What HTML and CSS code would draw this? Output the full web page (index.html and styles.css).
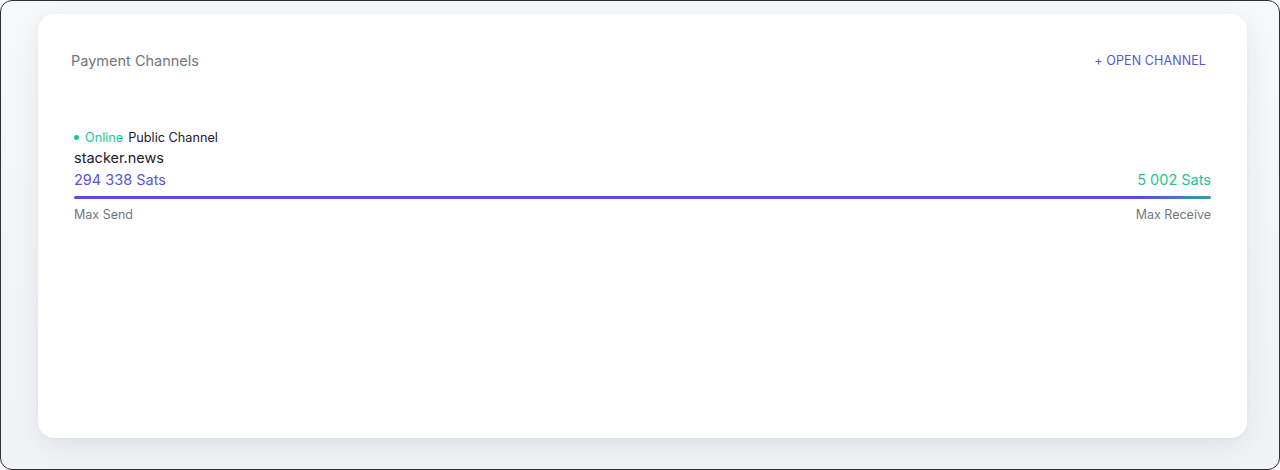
FILE: index.html
```html
<!DOCTYPE html>
<html lang="en">
<head>
<meta charset="utf-8">
<title>Payment Channels</title>
<link rel="stylesheet" href="styles.css">
</head>
<body>
<div class="frame">
  <section class="card">
    <header class="card-header">
      <h2 class="title">Payment Channels</h2>
      <button class="open-btn">+ OPEN CHANNEL</button>
    </header>
    <div class="channel">
      <div class="status">
        <span class="dot"></span>
        <span class="online">Online</span>
        <span class="kind">Public Channel</span>
      </div>
      <div class="alias">stacker.news</div>
      <div class="amounts">
        <span class="send">294 338 Sats</span>
        <span class="receive">5 002 Sats</span>
      </div>
      <div class="bar"></div>
      <div class="labels">
        <span>Max Send</span>
        <span>Max Receive</span>
      </div>
    </div>
  </section>
</div>
</body>
</html>
```
FILE: styles.css
```css
* { box-sizing: border-box; }
html, body {
  margin: 0;
  padding: 0;
  background: #ffffff;
}
body {
  font-family: Inter, "Noto Sans", sans-serif;
  width: 1280px;
  height: 470px;
  overflow: hidden;
}
.frame {
  width: 1280px;
  height: 470px;
  border: 1px solid #2e2f33;
  border-radius: 12px;
  background: linear-gradient(180deg, #f7f8fa 0%, #f1f2f6 100%);
  padding: 13px 32px 0 37px;
}
.card {
  width: 1209px;
  height: 424px;
  background: #ffffff;
  border-radius: 16px;
  box-shadow: 0 8px 28px rgba(30, 35, 60, 0.08), 0 1px 4px rgba(30, 35, 60, 0.04);
  padding: 33px 33px 0 33px;
}
.card-header {
  display: flex;
  align-items: center;
  justify-content: space-between;
  height: 26px;
}
.title {
  margin: 0;
  font-size: 14.5px;
  font-weight: 400;
  color: #72757f;
}
.open-btn {
  border: none;
  background: none;
  font-family: inherit;
  font-size: 12.5px;
  font-weight: 400;
  color: #5a56cf;
  padding: 4px 8px;
  letter-spacing: 0.1px;
  cursor: pointer;
}
.channel {
  margin-top: 55px;
  padding: 0 3px;
}
.status {
  display: flex;
  align-items: center;
  height: 18px;
  font-size: 12.7px;
}
.dot {
  width: 5px;
  height: 5px;
  border-radius: 50%;
  background: #1cc49a;
  margin-right: 6px;
}
.online {
  color: #1cc49a;
  margin-right: 5px;
}
.kind {
  color: #1d2029;
}
.alias {
  margin-top: 1px;
  height: 22px;
  line-height: 22px;
  font-size: 14.5px;
  color: #1d2029;
}
.amounts {
  display: flex;
  justify-content: space-between;
  height: 22px;
  line-height: 22px;
  font-size: 14.5px;
}
.send { color: #5b55d1; }
.receive { color: #1cc49a; }
.bar {
  margin-top: 5px;
  height: 3px;
  border-radius: 2px;
  background: linear-gradient(90deg, #5a4fdc 0%, #5a4fdc 94%, #2aa6a6 100%);
}
.labels {
  margin-top: 7px;
  display: flex;
  justify-content: space-between;
  height: 18px;
  line-height: 18px;
  font-size: 12.5px;
  color: #73767f;
}
```
